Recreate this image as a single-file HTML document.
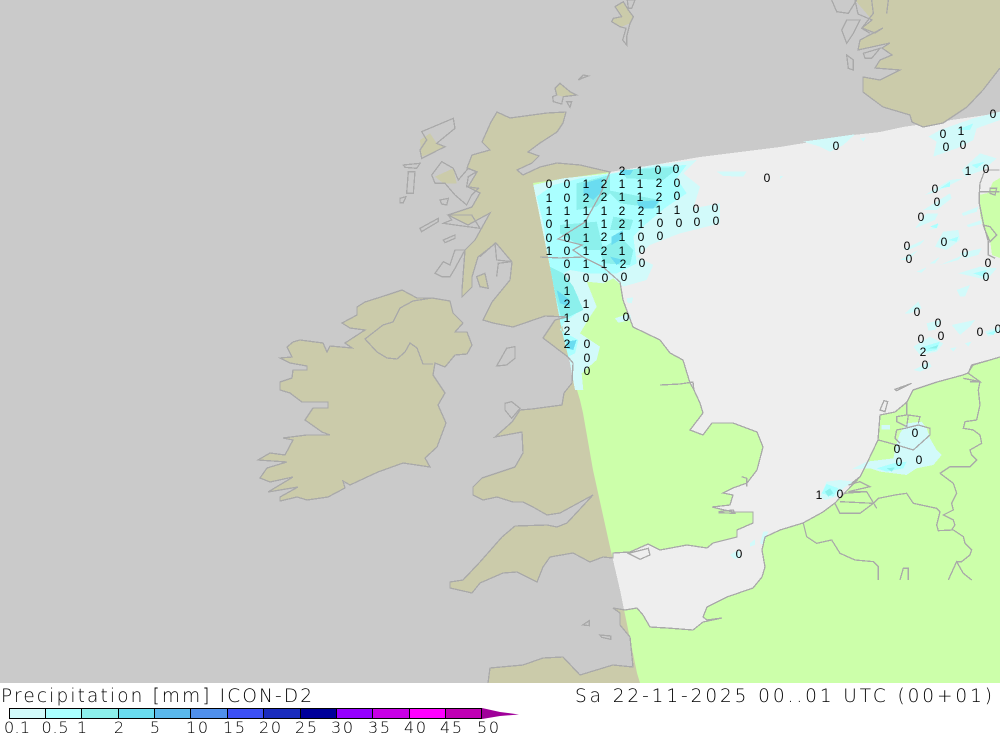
<!DOCTYPE html>
<html><head><meta charset="utf-8"><title>Precipitation</title>
<style>
html,body{margin:0;padding:0;background:#fff;width:1000px;height:733px;overflow:hidden}
svg{display:block}
text{font-family:"Liberation Sans",sans-serif;fill:#000}
.n text{font-size:12px;text-anchor:middle}
.l text{font-family:"DejaVu Sans","Liberation Sans",sans-serif;font-weight:200;font-size:16px;text-anchor:middle;fill:#000}
.t{font-family:"DejaVu Sans","Liberation Sans",sans-serif;font-weight:200;font-size:18.5px;fill:#000}
.o{fill:none;stroke:#a9a9a9;stroke-width:1.3}
.o3{fill:none;stroke:#a9a9a9;stroke-width:3.9}
</style></head><body>
<svg width="1000" height="733" viewBox="0 0 1000 733" xmlns="http://www.w3.org/2000/svg">
<defs>
<clipPath id="dom"><polygon points="533,183 610,172 653,165 700,157 780,147 853,135 880,132 903,127 1000,113 1000,683 640,683 637,673 620,590 610,547 593,470 583,413 580,400 577,390 570,363 550,267"/></clipPath>
<clipPath id="map"><rect x="0" y="0" width="1000" height="683"/></clipPath>
<path id="gb" d="M497,112 510,118 547,113 566,112 563,123 557,132 540,143 528,152 539,156 532,163 517,170 523,175 540,167 557,163 580,165 610,172 600,195 585,222 558,239 582,245 573,250 583,257 603,267 620,282 623,300 633,327 660,340 670,353 683,360 690,383 693,388 700,403 703,413 690,430 703,435 712,423 733,423 757,432 763,447 757,470 747,483 733,488 723,493 733,495 730,505 712,507 733,512 753,512 753,523 737,530 737,537 713,543 707,548 687,545 660,550 648,544 630,552 613,553 613,558 603,557 590,562 573,553 550,557 543,567 537,582 517,572 503,573 480,583 472,593 450,588 450,582 463,580 480,562 502,537 515,526 547,525 557,527 567,523 593,495 560,513 547,515 533,507 523,502 513,502 497,497 483,500 473,495 473,487 482,478 497,473 515,467 523,453 522,432 495,437 512,422 520,410 532,409 562,405 564,393 572,383 573,363 568,357 543,338 555,320 567,317 545,316 513,327 493,323 483,320 492,302 510,280 512,262 496,243 478,257 472,277 472,287 462,297 462,290 465,250 475,240 490,213 468,225 448,215 472,207 480,193 468,187 477,172 467,168 472,155 490,150 482,142 491,122Z"/>
<path id="eu" d="M488,683 490,668 523,665 543,658 563,657 580,675 603,668 613,665 633,667 630,637 620,625 620,613 613,608 625,610 637,608 643,615 650,627 667,628 693,630 703,622 722,618 707,620 703,617 707,607 727,597 753,588 762,577 765,567 762,550 765,537 780,530 803,523 823,512 835,503 860,477 867,463 878,440 880,415 895,412 907,402 913,390 937,382 963,375 968,373 973,365 990,360 1000,357 1000,683Z"/>
<path id="ie" d="M365,302 387,295 402,290 417,298 432,298 450,301 453,313 463,323 455,332 467,332 472,345 467,354 455,355 445,367 435,363 433,375 445,393 438,405 446,423 437,447 425,458 430,467 403,463 378,472 365,478 350,485 343,481 345,488 328,497 307,500 297,497 280,501 280,497 298,487 268,492 293,477 270,482 260,478 267,468 287,462 258,460 270,453 285,455 293,440 283,438 307,435 330,435 322,432 305,420 313,408 328,408 328,402 302,402 290,393 280,390 280,382 292,378 293,370 307,370 307,366 290,363 280,358 292,357 287,347 293,342 300,340 323,343 327,352 330,346 352,348 345,343 365,330 350,328 342,323 357,315 357,307Z"/>
</defs>
<rect width="1000" height="733" fill="#fff"/>
<g clip-path="url(#map)" shape-rendering="crispEdges">
<rect width="1000" height="683" fill="#cacaca"/>
<polygon points="533,183 610,172 653,165 700,157 780,147 853,135 880,132 903,127 1000,113 1000,683 640,683 637,673 620,590 610,547 593,470 583,413 580,400 577,390 570,363 550,267" fill="#eeeeee"/>
<g fill="#cbcbaa">
<use href="#gb"/><use href="#eu"/><use href="#ie"/>
<polygon points="855,0 1000,0 1000,68 983,90 967,107 943,123 923,127 912,122 910,115 883,107 863,92 863,77 880,80 900,70 875,68 880,60 892,55 882,48 890,43 858,50 860,40 883,28 875,33 862,28 872,20"/>
<g transform="translate(540,0) scale(.3333)"><polygon points="225,20 250,5 265,30 280,50 270,70 245,80 215,65 220,55 245,50"/><polygon points="45,265 60,250 90,275 110,285 70,290 50,285"/></g>
<g transform="translate(400,80) scale(.3333)"><polygon points="65,230 60,180 90,160 110,190 135,200 105,215"/><polygon points="105,290 160,265 170,310 130,310"/><polygon points="230,590 255,580 265,625 240,620"/></g>
</g>
<g clip-path="url(#dom)" fill="#ccffaa">
<use href="#gb"/><use href="#eu"/>
<polygon points="1000,178 993,182 988,193 979,195 980,215 983,226 990,240 992,255 1000,258"/>
</g>

<!-- main precipitation -->
<g transform="translate(520,150) scale(.3333)">
<polygon fill="#d2fafa" points="40,105 130,85 270,70 400,45 530,30 490,70 540,110 520,175 600,160 600,220 480,250 390,285 350,320 400,345 380,390 310,410 280,385 250,400 200,395 230,470 210,500 180,550 240,590 230,630 185,670 190,720 165,720 150,640 90,350"/>
<polygon fill="#aaffff" points="50,140 100,105 180,85 270,72 400,50 500,45 470,85 500,130 440,170 380,220 340,260 350,340 290,370 210,370 150,360 130,370 175,440 170,490 130,520 120,540 175,570 165,610 145,620 125,540 90,350 70,220"/>
<g fill="#8cf0ec">
<polygon points="170,100 270,75 270,130 230,170 170,180"/>
<polygon points="260,120 420,150 410,175 300,160"/>
<polygon points="300,60 480,50 430,90 320,85"/>
<polygon points="120,225 230,215 250,300 200,300 120,250"/>
<polygon points="240,300 300,260 340,300 330,345 250,340"/>
<polygon points="280,200 340,210 330,240 270,240"/>
<polygon points="90,350 130,370 160,410 190,480 125,510 105,430"/>
</g>
<g fill="#6adcf0">
<polygon points="190,100 245,85 250,120 220,150 190,130"/>
<polygon points="300,60 340,60 330,75 300,75"/>
<polygon points="350,155 420,150 400,175 360,175"/>
<polygon points="270,320 310,330 290,345"/>
<polygon points="275,260 310,240 300,270 275,285"/>
<polygon points="110,420 150,450 150,470 120,460"/>
<polygon points="140,575 170,570 160,600 140,595"/>
</g>
<polygon fill="#ccffaa" points="230,550 250,550 255,565 235,568"/>
<polygon fill="#d2fafa" points="285,505 330,490 335,510 295,518"/>
<polygon fill="#d2fafa" points="320,445 340,442 335,460 322,458"/>
<polygon fill="#d2fafa" points="590,65 680,65 670,80 610,78"/>
</g>
<!-- north sea patches -->
<g transform="translate(780,90) scale(.3333)" fill="#d2fafa">
<polygon points="70,155 225,133 190,165 150,185 120,170"/>
<polygon points="240,145 258,142 250,155"/>
<polygon points="445,140 480,120 580,85 660,65 660,90 590,115 580,150 530,175 460,200 470,155"/>
<polygon points="545,240 600,190 650,205 610,240 555,260"/>
<polygon points="435,315 510,270 550,265 470,305"/>
<polygon points="430,360 510,310 515,325 470,360"/>
<polygon points="405,415 440,370 475,370 465,390"/>
<polygon points="445,420 480,400 470,415"/>
<polygon points="545,370 595,350 590,365 550,378"/>
<polygon points="560,405 605,390 605,402 565,412"/>
<polygon points="370,478 435,448 420,465 385,480"/>
<polygon points="360,510 415,480 385,510"/>
<polygon points="465,470 490,425 535,420 540,450 500,480"/>
<polygon points="450,520 480,500 465,520"/>
<polygon points="480,525 550,495 535,510"/>
<polygon points="540,490 605,475 595,495 555,505"/>
<polygon points="410,545 440,532 425,548"/>
<polygon points="535,550 600,530 650,535 620,570 580,560"/>
<polygon points="530,600 570,585 555,620 540,620"/>
<polygon points="375,670 415,635 425,655 390,670"/>
<polygon points="440,700 485,690 465,720 445,722"/>
<polygon points="515,705 585,690 570,710 540,735"/>
<polygon points="615,725 660,710 660,725 625,740"/>
<polygon points="400,770 450,740 490,760 470,785 420,795"/>
<polygon points="510,775 530,772 520,785"/>
<polygon points="555,760 575,755 565,770"/>
<polygon points="400,840 450,815 445,835"/>
<polygon points="0,258 10,258 0,268"/>
<g fill="#aaffff"><polygon points="480,295 510,275 510,290"/><polygon points="450,410 475,400 470,415"/><polygon points="505,450 535,440 530,455"/><polygon points="580,550 620,540 610,560"/><polygon points="430,770 480,755 470,780 440,785"/><polygon points="620,730 650,720 640,735"/><polygon points="530,120 580,100 570,120"/><polygon points="575,225 615,215 590,235"/></g>
<polygon fill="#8cf0ec" points="445,775 475,765 470,775"/>
</g>
<!-- Netherlands patches -->
<g transform="translate(780,360) scale(.3333)" fill="#d2fafa">
<polygon points="305,195 330,195 330,208 305,208"/>
<polygon points="380,190 425,185 440,205 450,235 470,270 485,285 460,315 410,325 380,345 300,335 270,325 215,328 260,305 340,295 350,250 360,220"/>
<polygon points="120,410 140,365 180,360 220,365 190,385 170,410 135,420"/>
<polygon points="400,30 450,10 455,20 420,35"/>
<g fill="#aaffff"><polygon points="125,400 140,372 175,385 160,410"/><polygon points="290,325 340,310 380,305 370,325 320,335"/></g>
<polygon fill="#8cf0ec" points="135,395 150,385 160,400 145,410"/>
<polygon fill="#8cf0ec" points="320,325 345,322 335,335"/>
</g>
<g transform="translate(440,380) scale(.3333)" fill="#d2fafa">
<polygon points="870,525 895,510 905,530 885,538"/>
<polygon points="930,490 945,478 945,495 930,500"/>
<polygon points="960,490 970,455 985,455 970,495"/>
</g>

<!-- coastlines -->
<g class="o">
<use href="#gb"/><use href="#ie"/>
<polyline points="540,257 560,258 583,257"/>
<polyline points="660,385 680,384 693,382 694,391"/>
<polyline points="383,325 365,339 377,352 387,358 397,359 405,352 410,343 417,348 423,364 433,364"/>
<polyline points="383,325 393,322 400,308 413,301 432,298"/>
<polyline points="488,683 490,668 523,665 543,658 563,657 580,675 603,668 613,665 633,667 630,637 620,625 620,613 613,608 625,610 637,608 643,615 650,627 667,628 693,630 703,622 722,618 707,620 703,617 707,607 727,597 753,588 762,577 765,567 762,550 765,537 780,530 803,523 823,512 835,503 860,477 867,463 878,440 880,415 895,412 907,402 913,390 937,382 963,375 968,373 973,365 990,360 1000,357"/>
<polyline points="855,0 858,14 872,20 862,28 875,33 883,28 860,40 858,50 890,43 882,48 892,55 880,60 875,68 900,70 880,80 863,77 863,92 883,107 910,115 912,122 923,127 943,123 967,107 983,90 1000,68"/>
</g>
<g class="o3" transform="translate(820,0) scale(.3333)">
<polyline points="35,0 50,35 85,40 110,0"/>
<polygon points="80,60 65,90 80,130 100,100 120,60"/>
<polygon points="80,165 85,205 100,210 100,180"/>
<polyline points="155,0 160,40 125,85 150,100"/>
<polyline points="205,0 200,40"/>
<polygon points="130,160 180,145 155,175 135,175"/>
</g>
<g class="o3" transform="translate(540,0) scale(.3333)">
<polygon points="225,20 250,5 265,30 280,50 270,70 260,110 260,135 248,120 258,85 240,80 215,65 220,55 245,50"/>
<polygon points="262,0 285,0 275,25 265,25"/>
<polygon points="45,265 60,250 90,275 110,285 70,290 65,312 40,305 38,290 50,285"/>
<polygon points="80,305 95,305 90,322"/>
<polygon points="115,240 130,225 145,228 125,235"/>
</g>
<g class="o3" transform="translate(400,80) scale(.3333)">
<polygon points="65,155 160,115 165,145 110,190 135,200 105,215 65,235 60,210 80,180"/>
<polygon points="95,285 125,245 160,265 175,300 205,265 230,275 205,290 200,320 235,325 215,345 200,375 165,345 135,310 105,310"/>
<polygon points="120,360 145,355 140,375 125,372"/>
<polygon points="145,405 215,405 240,445 165,435 130,430 155,420"/>
<polygon points="60,445 115,415 115,425 65,455"/>
<polygon points="130,480 165,465 165,475 135,488"/>
<polygon points="105,580 130,545 150,555 165,510 195,510 165,565 150,590 125,590"/>
<polygon points="230,590 255,580 265,625 240,620"/>
<polygon points="10,255 60,250 50,265 15,262"/>
<polygon points="25,275 45,275 40,340 20,340"/>
<polygon points="0,355 18,350 10,368 0,368"/>
<polygon points="290,858 320,805 345,800 345,835 320,855"/>
<polyline points="240,530 285,490 290,540 335,545 295,550 290,590"/>
</g>
<g class="o3" transform="translate(440,380) scale(.3333)">
<polygon points="195,70 215,65 240,85 215,115 195,90"/>
<polygon points="565,520 625,505 630,525 600,538"/>
<polygon points="428,735 448,722 448,737"/>
<polygon points="480,765 512,768 512,778 485,772"/>
<polyline points="905,290 920,295 920,320"/>
<polyline points="835,395 880,390 885,400 835,398"/>
</g>
<g class="o3" transform="translate(780,360) scale(.3333)">
<polyline points="70,490 80,530 110,550 155,540 180,580 225,600 280,605 295,620 295,660"/>
<polyline points="505,660 530,605 550,640 575,660"/>
<polyline points="360,660 370,625 385,625 385,660"/>
<polyline points="165,430 180,460 240,460 280,430 295,415 345,405 380,400 400,430 470,445 480,455 470,495 475,512 520,510 550,530 555,550 575,570 570,585 545,605 530,605"/>
<polyline points="480,340 520,370 530,400 515,430 520,450 490,465 520,480 525,495 515,510"/>
<polyline points="480,340 510,320 570,320 590,300 575,285 570,270 605,250 600,225 580,210 550,205 555,185 590,180 600,135 595,90 600,65 550,55"/>
<polyline points="295,240 350,255 400,270 450,225 450,205 415,195 375,205 350,210 345,235 360,250"/>
<polyline points="380,125 380,165 350,170 350,185 380,200 385,165 420,170 415,190"/>
<polyline points="205,375 240,365 270,380 205,395 260,395 290,445"/>
<polyline points="180,425 280,430"/>
<polyline points="190,400 260,395"/>
<polyline points="215,370 240,350"/>
<polygon points="345,88 395,70 350,92"/>
<polygon points="300,150 312,122 323,125 315,155"/>
<polyline points="570,65 600,65 565,40 575,15 630,0"/>
</g>
<g class="o3" transform="translate(940,160) scale(.3333)">
<polyline points="135,30 120,70 118,100 118,130 130,190 145,245 145,285 165,295"/>
<polygon points="130,195 150,200 170,225 150,245 135,210"/>
<polygon points="150,85 170,85 165,105 150,100"/>
<polyline points="120,95 179,95"/>
<polyline points="135,30 179,30"/>
</g>

<!-- values -->
<g class="n">
<text x="622" y="175">2</text><text x="640" y="175">1</text><text x="658" y="174">0</text><text x="676" y="173">0</text>
<text x="549" y="188">0</text><text x="567" y="188">0</text><text x="586" y="188">1</text><text x="604" y="188">2</text><text x="622" y="188">1</text><text x="640" y="188">1</text><text x="659" y="187">2</text><text x="677" y="187">0</text>
<text x="549" y="202">1</text><text x="567" y="202">0</text><text x="586" y="202">2</text><text x="604" y="201">2</text><text x="622" y="201">1</text><text x="640" y="201">1</text><text x="659" y="201">2</text><text x="677" y="200">0</text>
<text x="549" y="215">1</text><text x="567" y="215">1</text><text x="586" y="215">1</text><text x="604" y="215">1</text><text x="622" y="215">2</text><text x="641" y="215">2</text><text x="659" y="214">1</text><text x="677" y="214">1</text><text x="696" y="213">0</text><text x="715" y="212">0</text>
<text x="549" y="228">0</text><text x="567" y="228">1</text><text x="586" y="228">1</text><text x="604" y="228">1</text><text x="622" y="228">2</text><text x="641" y="228">1</text><text x="660" y="227">0</text><text x="679" y="227">0</text><text x="697" y="226">0</text><text x="716" y="225">0</text>
<text x="549" y="242">0</text><text x="567" y="242">0</text><text x="586" y="242">1</text><text x="604" y="241">2</text><text x="622" y="241">1</text><text x="641" y="241">0</text><text x="660" y="240">0</text>
<text x="549" y="255">1</text><text x="567" y="255">0</text><text x="586" y="255">1</text><text x="604" y="255">2</text><text x="622" y="255">1</text><text x="642" y="254">0</text>
<text x="567" y="268">0</text><text x="586" y="268">1</text><text x="604" y="268">1</text><text x="623" y="268">2</text><text x="642" y="267">0</text>
<text x="567" y="282">0</text><text x="586" y="282">0</text><text x="605" y="282">0</text><text x="624" y="281">0</text>
<text x="567" y="295">1</text>
<text x="567" y="308">2</text><text x="586" y="308">1</text>
<text x="567" y="322">1</text><text x="586" y="322">0</text><text x="626" y="321">0</text>
<text x="567" y="335">2</text>
<text x="567" y="348">2</text><text x="587" y="348">0</text>
<text x="587" y="362">0</text><text x="587" y="375">0</text>
<text x="767" y="182">0</text><text x="836" y="150">0</text>
<text x="943" y="138">0</text><text x="961" y="135">1</text><text x="946" y="151">0</text><text x="963" y="149">0</text><text x="993" y="118">0</text>
<text x="968" y="175">1</text><text x="986" y="173">0</text>
<text x="935" y="193">0</text><text x="937" y="206">0</text><text x="921" y="221">0</text><text x="944" y="246">0</text><text x="907" y="250">0</text><text x="909" y="263">0</text><text x="965" y="257">0</text><text x="988" y="267">0</text><text x="986" y="281">0</text>
<text x="917" y="316">0</text><text x="938" y="327">0</text><text x="941" y="340">0</text><text x="921" y="343">0</text><text x="923" y="356">2</text><text x="925" y="369">0</text><text x="980" y="336">0</text><text x="998" y="333">0</text>
<text x="739" y="558">0</text>
<text x="915" y="437">0</text><text x="897" y="453">0</text><text x="899" y="466">0</text><text x="919" y="464">0</text><text x="819" y="499">1</text><text x="840" y="498">0</text>
</g>
</g>

<!-- footer -->
<text class="t" x="1" y="702" textLength="311" lengthAdjust="spacing">Precipitation [mm] ICON-D2</text>
<text class="t" x="575" y="702" textLength="417" lengthAdjust="spacing">Sa 22-11-2025 00..01 UTC (00+01)</text>
<g shape-rendering="crispEdges" stroke="#000" stroke-width="1">
<rect x="9.5" y="708.5" width="36" height="10" fill="#d2fafa"/>
<rect x="45.5" y="708.5" width="36" height="10" fill="#aaffff"/>
<rect x="81.5" y="708.5" width="37" height="10" fill="#8cf0ec"/>
<rect x="118.5" y="708.5" width="36" height="10" fill="#6adcf0"/>
<rect x="154.5" y="708.5" width="36" height="10" fill="#5ab8ec"/>
<rect x="190.5" y="708.5" width="37" height="10" fill="#5090ec"/>
<rect x="227.5" y="708.5" width="36" height="10" fill="#3c50f5"/>
<rect x="263.5" y="708.5" width="37" height="10" fill="#1a2cbe"/>
<rect x="300.5" y="708.5" width="36" height="10" fill="#00009a"/>
<rect x="336.5" y="708.5" width="36" height="10" fill="#9600fe"/>
<rect x="372.5" y="708.5" width="37" height="10" fill="#c800e6"/>
<rect x="409.5" y="708.5" width="36" height="10" fill="#ff00ff"/>
<rect x="445.5" y="708.5" width="36" height="10" fill="#c000b4"/>
</g>
<polygon points="482,708 500,712 519,714.5 500,716 482,719" fill="#a0009a"/>
<g class="l">
<text x="17" y="733" textLength="26" lengthAdjust="spacing">0.1</text>
<text x="55" y="733" textLength="27" lengthAdjust="spacing">0.5</text>
<text x="82" y="733">1</text><text x="119" y="733">2</text><text x="155" y="733">5</text>
<text x="197" y="733" textLength="22" lengthAdjust="spacing">10</text>
<text x="234" y="733" textLength="22" lengthAdjust="spacing">15</text>
<text x="270" y="733" textLength="22" lengthAdjust="spacing">20</text>
<text x="306" y="733" textLength="22" lengthAdjust="spacing">25</text>
<text x="342" y="733" textLength="22" lengthAdjust="spacing">30</text>
<text x="379" y="733" textLength="22" lengthAdjust="spacing">35</text>
<text x="415" y="733" textLength="22" lengthAdjust="spacing">40</text>
<text x="451" y="733" textLength="22" lengthAdjust="spacing">45</text>
<text x="488" y="733" textLength="22" lengthAdjust="spacing">50</text>
</g>
</svg>
</body></html>
